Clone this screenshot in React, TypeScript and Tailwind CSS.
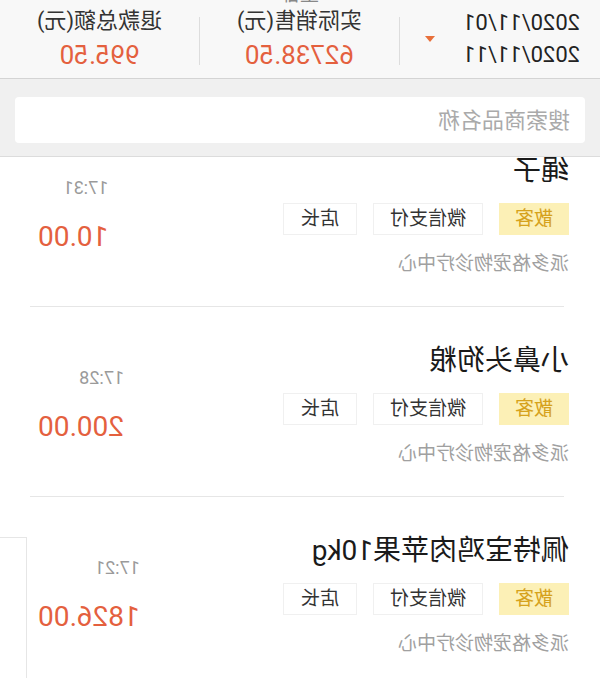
import React from "react";

type Item = { name: string; time: string; amount: string };

const items: Item[] = [
  { name: "绳子", time: "17:31", amount: "10.00" },
  { name: "小鼻头狗粮", time: "17:28", amount: "200.00" },
  { name: "佩特宝鸡肉苹果10kg", time: "17:21", amount: "1826.00" },
];

function Row({ item }: { item: Item }) {
  return (
    <div>
      <div className="flex justify-between h-[189px] pl-[31px] pr-[38px]">
        <div className="flex flex-col">
          <div className="mt-[36px] h-[36px] leading-[36px] text-[28px] text-[#1a1a1a] whitespace-nowrap">
            {item.name}
          </div>
          <div className="mt-[14px] flex gap-[16px]">
            <div className="h-[32px] px-[16px] flex items-center bg-[#fcf0b6] text-[#d6a21c] text-[19px]">
              散客
            </div>
            <div className="h-[32px] px-[16px] flex items-center bg-white border border-[#f0f0f0] text-[#333] text-[19px]">
              微信支付
            </div>
            <div className="h-[32px] px-[17px] flex items-center bg-white border border-[#f0f0f0] text-[#333] text-[19px]">
              店长
            </div>
          </div>
          <div className="mt-[16px] h-[26px] leading-[26px] text-[19px] text-[#a0a0a0] whitespace-nowrap">
            派多格宠物诊疗中心
          </div>
        </div>
        <div className="flex flex-col items-start">
          <div className="mt-[59px] h-[24px] leading-[24px] text-[18px] text-[#9a9a9a]">
            {item.time}
          </div>
          <div className="mt-[20px] h-[34px] leading-[34px] text-[28px] text-[#e4603e]">
            {item.amount}
          </div>
        </div>
      </div>
      <div className="ml-[36px] w-[534px] h-px bg-[#e6e6e6]" />
    </div>
  );
}

export default function App() {
  return (
    <div className="relative w-[600px] h-[678px] overflow-hidden bg-white [transform:scaleX(-1)] font-['Roboto','Noto_Sans_CJK_SC',sans-serif]">
      {/* header */}
      <div className="flex h-[79px] bg-[#f8f8f8] border-b border-[#d4d4d4]">
        <div className="w-[200px] flex items-center pl-[20px]">
          <div className="flex flex-col text-[22px] leading-[32px] text-[#222]">
            <span>2020/11/01</span>
            <span>2020/11/11</span>
          </div>
          <div className="ml-auto mr-[25px] w-0 h-0 border-l-[5px] border-r-[5px] border-t-[6px] border-l-transparent border-r-transparent border-t-[#e8703a]" />
        </div>
        <div className="mt-[17px] w-px h-[48px] bg-[#dddddd]" />
        <div className="flex-1 flex flex-col items-center relative">
          <div className="absolute top-[-18px] left-0 right-0 text-center text-[20px] leading-[24px] text-[#888]">
            全部
          </div>
          <div className="mt-[7px] h-[28px] leading-[28px] text-[22px] text-[#333]">实际销售(元)</div>
          <div className="mt-[4px] h-[32px] leading-[32px] text-[26px] text-[#e4603e]">62738.50</div>
        </div>
        <div className="mt-[17px] w-px h-[48px] bg-[#dddddd]" />
        <div className="flex-1 flex flex-col items-center">
          <div className="mt-[7px] h-[28px] leading-[28px] text-[22px] text-[#333]">退款总额(元)</div>
          <div className="mt-[4px] h-[32px] leading-[32px] text-[26px] text-[#e4603e]">995.50</div>
        </div>
      </div>

      {/* search */}
      <div className="bg-[#f0f0f0] pt-[18px] pb-[13px] px-[15px] border-b border-[#dcdcdc]">
        <div className="h-[46px] bg-white rounded-[4px] pl-[15px] flex items-center text-[22px] text-[#aaaaaa]">
          搜索商品名称
        </div>
      </div>

      {/* list */}
      <div className="h-[521px] overflow-hidden">
        <div className="-mt-[40px]">
          {items.map((it) => (
            <Row key={it.name} item={it} />
          ))}
        </div>
      </div>

      <div className="absolute left-[573px] top-[537px] right-0 bottom-0 border-l border-t border-[#e6e6e6] bg-white" />
    </div>
  );
}
